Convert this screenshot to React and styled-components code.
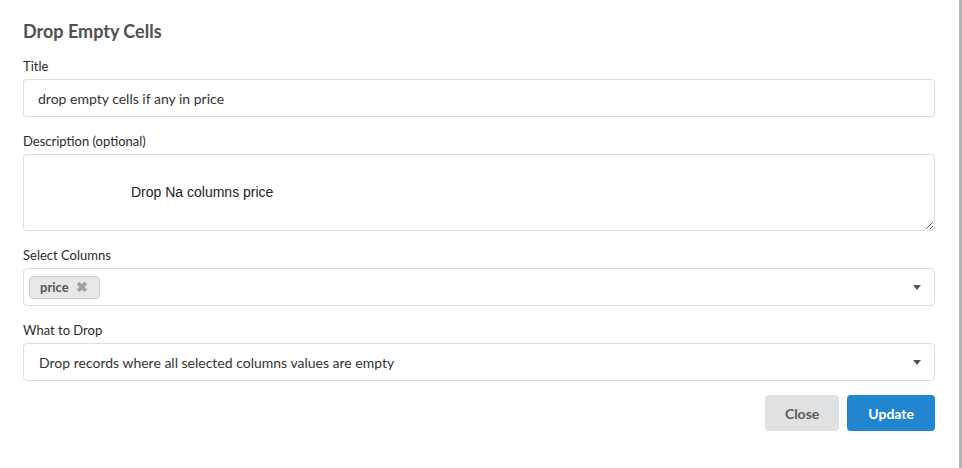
import React from "react";
import styled, { createGlobalStyle } from "styled-components";

const GlobalStyle = createGlobalStyle`
  html, body {
    margin: 0;
    padding: 0;
    height: 100%;
    background: #b4b4b4;
    font-family: Lato, "Helvetica Neue", Arial, sans-serif;
  }
  #root {
    height: 100%;
  }
  * {
    box-sizing: border-box;
  }
`;

const Modal = styled.div`
  width: 959px;
  height: 468px;
  background: #fff;
  padding: 20px 24px 0 23px;
`;

const Heading = styled.h2`
  margin: 0 0 15px;
  font-size: 18px;
  line-height: 23px;
  font-weight: 700;
  color: #505050;
`;

const Field = styled.div`
  margin-bottom: 16px;
`;

const Label = styled.label`
  display: block;
  font-size: 13px;
  line-height: 16px;
  color: #2b2b2b;
  margin-bottom: 5px;
`;

const TextInput = styled.input`
  display: block;
  width: 100%;
  height: 38px;
  margin: 0;
  padding: 0 14px;
  font-family: Lato, sans-serif;
  font-size: 14px;
  color: #333;
  border: 1px solid rgba(34, 36, 38, 0.15);
  border-radius: 4px;
  outline: none;
`;

const TextArea = styled.textarea`
  display: block;
  width: 100%;
  height: 77px;
  margin: 0;
  padding: 29px 12px 8px;
  text-indent: 95px;
  font-family: "Liberation Sans", Arial, sans-serif;
  font-size: 14px;
  line-height: 16px;
  color: #222;
  border: 1px solid rgba(34, 36, 38, 0.15);
  border-radius: 4px;
  outline: none;
`;

const SelectBox = styled.div`
  display: flex;
  align-items: center;
  height: 38px;
  padding: ${(p) => (p.multi ? "0 0 0 5px" : "0 0 0 15px")};
  border: 1px solid rgba(34, 36, 38, 0.15);
  border-radius: 4px;
  font-size: 14px;
  color: #333;
`;

const SelectValue = styled.div`
  flex: 1;
  display: flex;
  align-items: center;
`;

const Chip = styled.span`
  display: inline-flex;
  align-items: center;
  height: 23px;
  padding: 0 11px 0 10px;
  background: #e8e8e8;
  border: 1px solid #cfcfcf;
  border-radius: 4px;
  font-size: 13px;
  font-weight: 700;
  color: #555;
`;

const ChipRemove = styled.span`
  margin-left: 7px;
  font-size: 14px;
  line-height: 1;
  color: #a0a0a0;
`;

const Caret = styled.span`
  width: 0;
  height: 0;
  margin-right: 13px;
  border-left: 4px solid transparent;
  border-right: 4px solid transparent;
  border-top: 5px solid #555;
`;

const Actions = styled.div`
  display: flex;
  justify-content: flex-end;
  gap: 8px;
  margin-top: -2px;
`;

const Button = styled.button`
  height: 36px;
  padding: 0 ${(p) => (p.primary ? "21px" : "20px")};
  border: none;
  border-radius: 4px;
  font-family: Lato, sans-serif;
  font-size: 14px;
  font-weight: 700;
  cursor: pointer;
  background: ${(p) => (p.primary ? "#2185d0" : "#e0e1e2")};
  color: ${(p) => (p.primary ? "#fff" : "#5b5b5b")};
`;

export default function App() {
  return (
    <>
      <GlobalStyle />
      <Modal>
        <Heading>Drop Empty Cells</Heading>
        <Field>
          <Label>Title</Label>
          <TextInput defaultValue="drop empty cells if any in price" />
        </Field>
        <Field>
          <Label>Description (optional)</Label>
          <TextArea defaultValue="Drop Na columns price" />
        </Field>
        <Field>
          <Label>Select Columns</Label>
          <SelectBox multi>
            <SelectValue>
              <Chip>
                price
                <ChipRemove>✖</ChipRemove>
              </Chip>
            </SelectValue>
            <Caret />
          </SelectBox>
        </Field>
        <Field>
          <Label>What to Drop</Label>
          <SelectBox>
            <SelectValue>Drop records where all selected columns values are empty</SelectValue>
            <Caret />
          </SelectBox>
        </Field>
        <Actions>
          <Button>Close</Button>
          <Button primary>Update</Button>
        </Actions>
      </Modal>
    </>
  );
}
